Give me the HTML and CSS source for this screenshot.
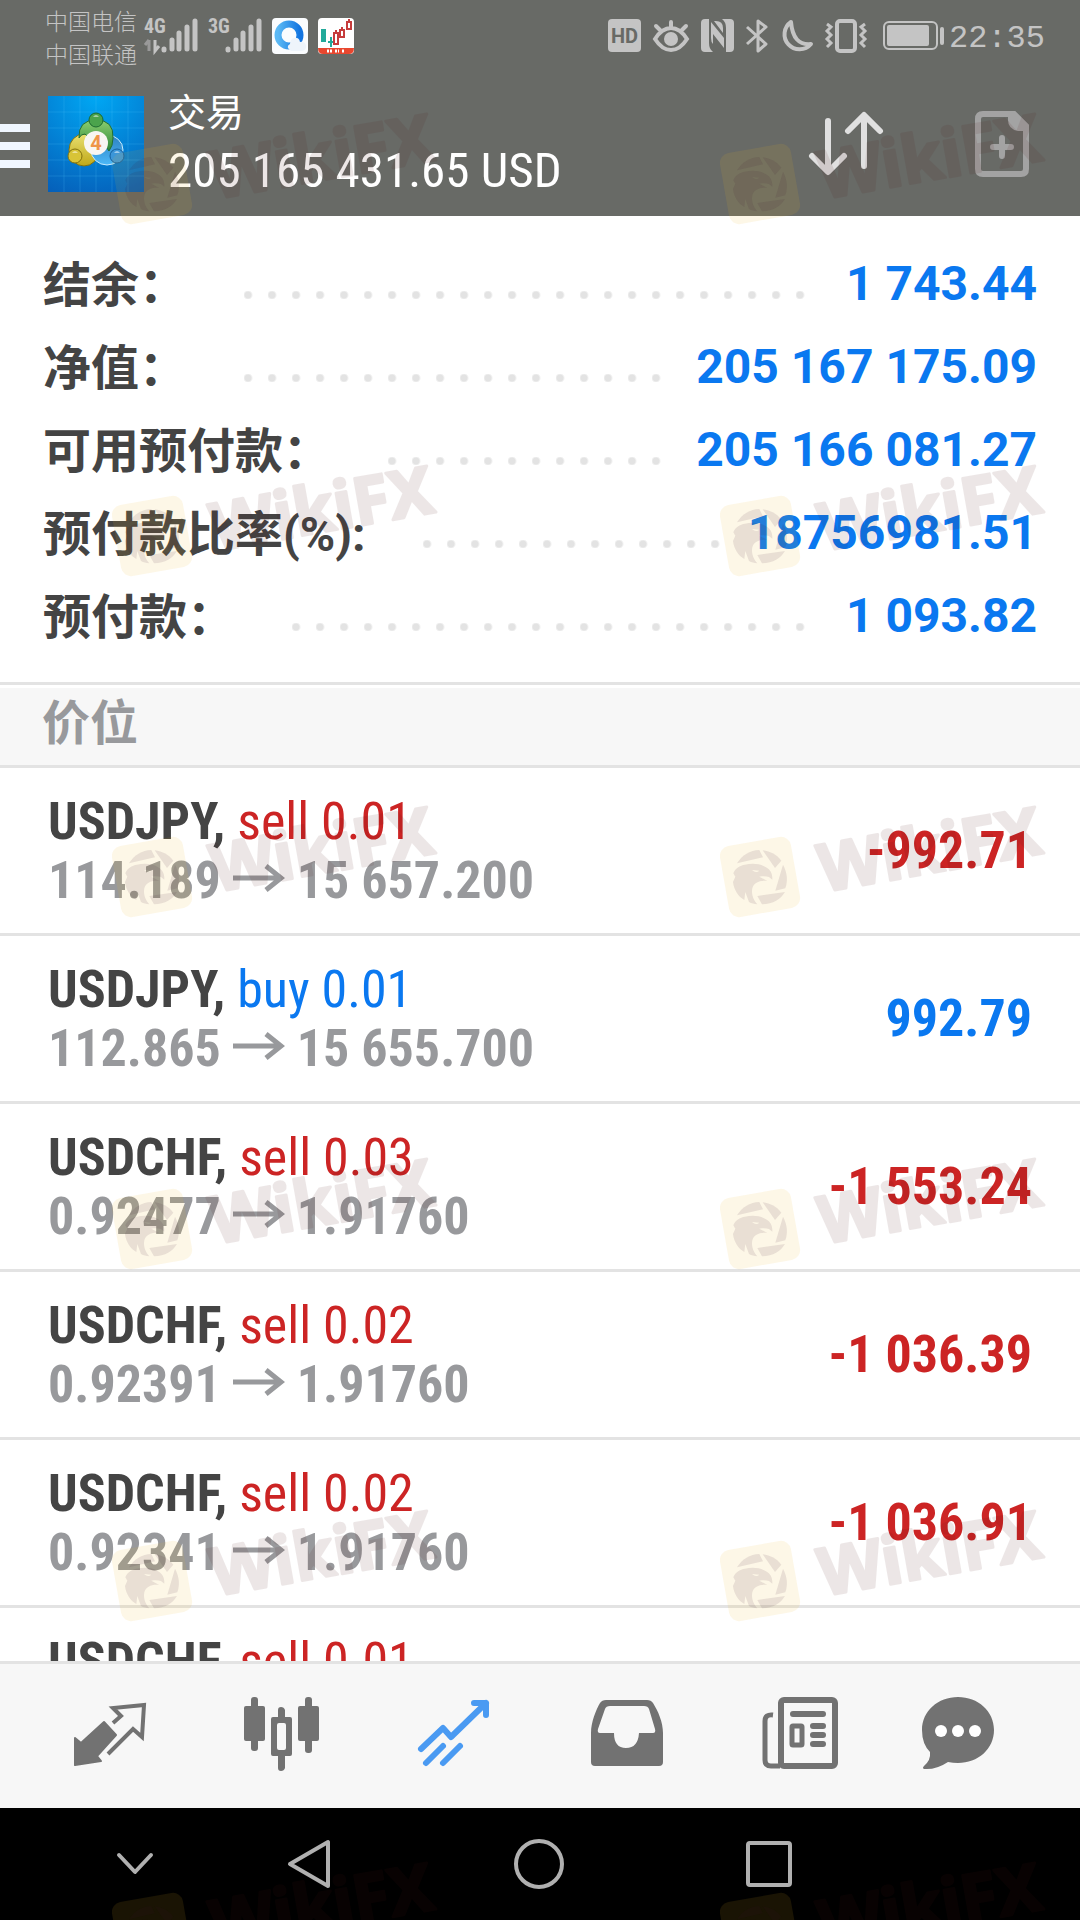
FILE: index.html
```
<!DOCTYPE html>
<html lang="zh-CN">
<head>
    <meta charset="UTF-8">
    <meta name="viewport" content="width=device-width">
    <title>交易</title>
    <link rel="stylesheet" href="styles.css">
</head>
<body>
    <!-- shared shapes -->
    <svg class="defs" width="0" height="0">
        <symbol id="arrow" viewBox="0 0 52 28">
            <path d="M0 14H48M33 2L48 14L33 26" fill="none" stroke="currentColor" stroke-width="5"/>
        </symbol>
        <symbol id="mark" viewBox="0 0 340 125">
            <rect x="4" y="44" width="72" height="72" rx="10" transform="rotate(-10 40 80)" fill="#ecb424" fill-opacity=".11"/>
            <g transform="translate(-40 -17) scale(.3333)" fill="#3c1430" fill-opacity=".1">
                <path d="M171 250C186 225 210 211 238 210L249 232Z"/>
                <path d="M248 211C272 214 290 224 304 242L285 264Z"/>
                <path d="M309 254C322 278 324 302 316 325L286 332Z"/>
                <path d="M315 336C302 358 280 372 246 373L232 348Z"/>
                <path d="M160 280C165 265 180 256 195 254C215 250 240 250 258 262C272 270 278 282 277 299L267 291C258 288 248 288 238 290L262 303C240 300 222 308 217 325C213 345 222 362 232 373C222 372 215 370 207 366L196 336L193 360C175 350 162 330 159 306L166 290ZM216 270Q228 281 238 272Z"/>
            </g>
            <text class="mark-text" x="103" y="95" transform="rotate(-10 103 95)">WikiFX</text>
        </symbol>
    </svg>

    <div class="app">
        <header class="head">
            <div class="status">
                <div class="carrier">
                    <span>中国电信</span>
                    <span>中国联通</span>
                </div>
                <svg width="54" height="36" viewBox="0 0 54 36">
                    <text x="0" y="15">4G</text>
                    <path d="M5 22V33M5 22L1 27" fill="none" stroke="#999" stroke-width="3"/>
                    <path d="M11 22V33L15 28" fill="none" stroke="currentColor" stroke-width="3"/>
                    <path d="M20 31V32M28 22V31M35 15V31M43 9V31M51 3V31" fill="none" stroke="currentColor" stroke-width="5" stroke-linecap="round"/>
                </svg>
                <svg class="sim2" width="54" height="36" viewBox="0 0 54 36">
                    <text x="0" y="15">3G</text>
                    <path d="M20 31V32M28 22V31M35 15V31M43 9V31M51 3V31" fill="none" stroke="currentColor" stroke-width="5" stroke-linecap="round"/>
                </svg>
                <svg class="gap" width="36" height="36" viewBox="0 0 36 36">
                    <defs><linearGradient id="ring"><stop offset="0" stop-color="#5ab8f4"/><stop offset="1" stop-color="#1274e0"/></linearGradient></defs>
                    <rect width="36" height="36" rx="4" fill="#fafcfe"/>
                    <circle cx="17" cy="17" r="11" fill="none" stroke="url(#ring)" stroke-width="7"/>
                    <path d="M19 33H30Q35 32 34 27Q32 23 28 24Q27 19 22 20Q18 21 18 26Q13 29 19 33Z" fill="#eef4fb"/>
                </svg>
                <svg class="gap" width="36" height="36" viewBox="0 0 36 36">
                    <rect width="36" height="36" rx="4" fill="#fff"/>
                    <path d="M0 30H36Q36 36 31 36H5Q0 36 0 30Z" fill="#e8472f"/>
                    <path d="M3 11H8V24H3ZM10 23H15V25H10ZM12 19H14V29H12Z" fill="#22a99a"/>
                    <path d="M16 15H20V26H16ZM22 12H26V19H22ZM29 4H33V11H29ZM18 12V15M24 9V12M31 1V4" fill="none" stroke="#c63c3c" stroke-width="2"/>
                    <path d="M9 33H15M17 33H21M24 33H26" stroke="#fff" stroke-width="3" stroke-dasharray="2 1"/>
                </svg>
                <div class="tray">
                    <svg width="33" height="36" viewBox="0 0 33 36">
                        <rect y="1" width="33" height="33" rx="4" fill="currentColor"/>
                        <text class="hd" x="3" y="25">HD</text>
                    </svg>
                    <svg width="36" height="36" viewBox="0 0 36 36" fill="none" stroke="currentColor" stroke-width="4" stroke-linecap="round">
                        <path d="M2 21Q9 10 18 10T34 21Q27 32 18 32T2 21ZM18 9V4M7 12L3 8M29 12L33 8"/>
                        <circle cx="18" cy="21" r="7" fill="currentColor" stroke="none"/>
                    </svg>
                    <svg width="33" height="36" viewBox="0 0 33 36">
                        <path d="M4 1H8V25Q8 31 12 34H4Q0 34 0 30V5Q0 1 4 1ZM29 34H25V10Q25 4 21 1H29Q33 1 33 5V30Q33 34 29 34Z" fill="currentColor"/>
                        <path d="M10 4L23 20V30L12 16V26Q10 24 10 20ZM13 3Q22 2 22 10V15Z" fill="currentColor"/>
                    </svg>
                    <svg width="22" height="36" viewBox="0 0 22 36" fill="none" stroke="currentColor" stroke-width="3">
                        <path d="M1 9L20 26L12 33V3L20 9L1 26" stroke-linejoin="round"/>
                    </svg>
                    <svg width="33" height="36" viewBox="0 0 33 36" fill="none" stroke="currentColor" stroke-width="4" stroke-linejoin="round">
                        <path d="M11 4A15 15 0 1 0 31 26Q13 28 11 4Z"/>
                    </svg>
                    <svg width="42" height="36" viewBox="0 0 42 36" fill="none" stroke="currentColor">
                        <rect x="12" y="3" width="18" height="30" rx="3" stroke-width="4"/>
                        <path d="M2 6L6 9L2 13L6 17L2 21L6 25L2 29M40 6L36 9L40 13L36 17L40 21L36 25L40 29" stroke-width="3"/>
                    </svg>
                    <svg class="battery" width="62" height="36" viewBox="0 0 62 36">
                        <rect x="1" y="4" width="53" height="27" rx="5" fill="none" stroke="currentColor" stroke-width="2"/>
                        <rect x="4" y="7" width="42" height="21" rx="2" fill="currentColor"/>
                        <rect x="57" y="9" width="4" height="18" rx="2" fill="currentColor"/>
                    </svg>
                    <time class="clock">22:35</time>
                </div>
            </div>
            <div class="bar">
                <button class="menu" aria-label="菜单"><i></i><i></i><i></i></button>
                <svg class="logo" width="96" height="96" viewBox="0 0 96 96">
                    <defs>
                        <radialGradient id="sky" cx=".5" cy="0" r="1.1"><stop offset="0" stop-color="#00a8f4"/><stop offset="1" stop-color="#0560ba"/></radialGradient>
                        <linearGradient id="gr" x2="0" y2="1"><stop offset="0" stop-color="#8ccf70"/><stop offset="1" stop-color="#2c8738"/></linearGradient>
                        <linearGradient id="ye" x2="0" y2="1"><stop offset="0" stop-color="#e8e070"/><stop offset="1" stop-color="#c0a818"/></linearGradient>
                        <linearGradient id="bl" x2="0" y2="1"><stop offset="0" stop-color="#2d80c0"/><stop offset="1" stop-color="#4cb8f8"/></linearGradient>
                    </defs>
                    <rect width="96" height="96" fill="url(#sky)"/>
                    <path d="M16 0V96M32 0V96M48 0V96M64 0V96M80 0V96M0 16H96M0 32H96M0 48H96M0 64H96M0 80H96" stroke="#5cc8ff" stroke-opacity=".2"/>
                    <ellipse cx="36" cy="54" rx="15" ry="16" fill="url(#ye)" stroke="#82720e"/>
                    <ellipse cx="59" cy="54" rx="16" ry="15" fill="url(#bl)" stroke="#c8ecff"/>
                    <path d="M31 42Q30 24 48 24T65 42Q65 50 61 55L53 44H43L37 38Q33 38 31 42Z" fill="url(#gr)" stroke="#226e34"/>
                    <circle cx="48" cy="24" r="7" fill="#4ba34c" stroke="#1c6a30"/>
                    <circle cx="27" cy="60" r="7" fill="#d8c437" stroke="#82720e"/>
                    <circle cx="69" cy="60" r="7" fill="#3c96d8" stroke="#155f9e"/>
                    <path d="M45 21Q48 17 51 21ZM24 57Q27 53 30 57ZM66 57Q69 53 72 57Z" fill="#fff" fill-opacity=".5"/>
                    <circle cx="48" cy="47" r="12" fill="#f8f6f2"/>
                    <text x="48" y="54" font-size="20" font-weight="700" text-anchor="middle" fill="#ef9548">4</text>
                </svg>
                <div class="account">
                    <h1>交易</h1>
                    <p>205 165 431.65 USD</p>
                </div>
                <button class="sort" aria-label="排序">
                    <svg width="76" height="68" viewBox="0 0 76 68" fill="none" stroke="#e0e0e0" stroke-width="6" stroke-linecap="round" stroke-linejoin="round">
                        <path d="M20 11V61M4 46L20 62L36 46M56 56V6M40 21L56 5L72 21"/>
                    </svg>
                </button>
                <button aria-label="新订单">
                    <svg width="56" height="68" viewBox="0 0 56 68" fill="none" stroke="#a3a3a3" stroke-width="6">
                        <path d="M9 4H40L52 16V59Q52 64 47 64H9Q4 64 4 59V9Q4 4 9 4Z"/>
                        <path d="M34 4H41L54 17V21H44Q34 19 34 10Z" fill="#a3a3a3" stroke="none"/>
                        <path d="M28 28V46M19 37H37" stroke-linecap="round"/>
                    </svg>
                </button>
            </div>
        </header>

        <main class="content">
            <dl class="summary">
                <div class="line"><dt>结余：</dt><dd>1 743.44</dd></div>
                <div class="line"><dt>净值：</dt><dd>205 167 175.09</dd></div>
                <div class="line"><dt>可用预付款：</dt><dd>205 166 081.27</dd></div>
                <div class="line"><dt>预付款比率(%):</dt><dd>18756981.51</dd></div>
                <div class="line"><dt>预付款：</dt><dd>1 093.82</dd></div>
            </dl>
            <h2 class="section">价位</h2>
            <ul class="deals">
                <li>
                    <div>
                        <p><b>USDJPY,</b> <span class="sell">sell 0.01</span></p>
                        <p class="price">114.189 <svg class="to"><use href="#arrow"/></svg> 15 657.200</p>
                    </div>
                    <strong class="sell">-992.71</strong>
                </li>
                <li>
                    <div>
                        <p><b>USDJPY,</b> <span class="buy">buy 0.01</span></p>
                        <p class="price">112.865 <svg class="to"><use href="#arrow"/></svg> 15 655.700</p>
                    </div>
                    <strong class="buy">992.79</strong>
                </li>
                <li>
                    <div>
                        <p><b>USDCHF,</b> <span class="sell">sell 0.03</span></p>
                        <p class="price">0.92477 <svg class="to"><use href="#arrow"/></svg> 1.91760</p>
                    </div>
                    <strong class="sell">-1 553.24</strong>
                </li>
                <li>
                    <div>
                        <p><b>USDCHF,</b> <span class="sell">sell 0.02</span></p>
                        <p class="price">0.92391 <svg class="to"><use href="#arrow"/></svg> 1.91760</p>
                    </div>
                    <strong class="sell">-1 036.39</strong>
                </li>
                <li>
                    <div>
                        <p><b>USDCHF,</b> <span class="sell">sell 0.02</span></p>
                        <p class="price">0.92341 <svg class="to"><use href="#arrow"/></svg> 1.91760</p>
                    </div>
                    <strong class="sell">-1 036.91</strong>
                </li>
                <li>
                    <div>
                        <p><b>USDCHF,</b> <span class="sell">sell 0.01</span></p>
                    </div>
                </li>
            </ul>
        </main>

        <nav class="tabs">
            <a href="#quotes" aria-label="行情">
                <svg width="96" height="96" viewBox="0 0 96 96">
                    <path d="M13 50L19 55L42 34L54 47L35 68L39 73L13 77Z" fill="currentColor" stroke="currentColor" stroke-width="2" stroke-linejoin="round"/>
                    <path d="M51 35L59 28L51 20L82 17L80 49L71 41L46 66" fill="none" stroke="currentColor" stroke-width="4"/>
                </svg>
            </a>
            <a href="#charts" aria-label="图表">
                <svg width="96" height="96" viewBox="0 0 96 96" fill="currentColor">
                    <rect x="10" y="18" width="21" height="35" rx="2"/>
                    <rect x="17" y="9" width="7" height="54" rx="3"/>
                    <path d="M39 29H56Q58 29 58 31V66Q58 68 56 68H39Q37 68 37 66V31Q37 29 39 29ZM45 35Q43 35 43 37V60Q43 62 45 62H50Q52 62 52 60V37Q52 35 50 35Z" fill-rule="evenodd"/>
                    <path d="M44 30V22Q44 19 47 19T51 22V30ZM44 67V80Q44 83 47 83T51 80V67Z"/>
                    <rect x="64" y="18" width="21" height="35" rx="2"/>
                    <rect x="71" y="9" width="7" height="56" rx="3"/>
                </svg>
            </a>
            <a class="cur" href="#trade" aria-label="交易">
                <svg width="96" height="96" viewBox="0 0 96 96" fill="none" stroke="currentColor" stroke-width="6" stroke-linecap="round" stroke-linejoin="round">
                    <path d="M15 61L37 40L45 49L80 15M68 15H80V27"/>
                    <path d="M20 75L37 58M37 75L54 58"/>
                </svg>
            </a>
            <a href="#history" aria-label="历史">
                <svg width="96" height="96" viewBox="0 0 96 96" fill="currentColor">
                    <path fill-rule="evenodd" d="M13 45C13 34 18 22 22 15Q24 12 28 12H69Q73 12 75 15C80 23 85 34 85 45V74Q85 78 81 78H17Q13 78 13 74ZM32 18Q28 18 27 21L20 41Q19 45 22 45H36Q36 60 48 60T61 45H75Q78 45 77 41L71 21Q70 18 66 18Z"/>
                </svg>
            </a>
            <a href="#news" aria-label="新闻">
                <svg width="96" height="96" viewBox="0 0 96 96" fill="none" stroke="currentColor" stroke-width="6" stroke-linecap="round">
                    <rect x="31" y="12" width="54" height="66" rx="3"/>
                    <path d="M23 27Q15 26 15 33V72Q15 78 21 78H30" stroke-width="5" stroke-linecap="butt"/>
                    <path d="M43 26H73M63 38H73M63 47H73M63 56H73"/>
                    <rect x="42" y="38" width="10" height="19" rx="1" stroke-width="5"/>
                </svg>
            </a>
            <a href="#chat" aria-label="聊天">
                <svg width="96" height="96" viewBox="0 0 96 96" fill="currentColor">
                    <path d="M36 9C56 9 72 23 72 42S56 75 36 75Q31 75 26 74Q14 82 2 81Q0 80 2 78Q9 72 8 64Q0 56 0 42C0 23 16 9 36 9Z"/>
                    <g fill="#fff"><circle cx="19" cy="43" r="6"/><circle cx="36" cy="43" r="6"/><circle cx="53" cy="43" r="6"/></g>
                </svg>
            </a>
        </nav>

        <div class="system">
            <button aria-label="收起"><svg width="52" height="52" viewBox="0 0 52 52"><path d="M10 17L26 34L42 17"/></svg></button>
            <button aria-label="返回"><svg width="52" height="52" viewBox="0 0 52 52"><path d="M45 4V48L7 26Z"/></svg></button>
            <button aria-label="主页"><svg width="52" height="52" viewBox="0 0 52 52"><circle cx="26" cy="26" r="23"/></svg></button>
            <button aria-label="最近"><svg width="52" height="52" viewBox="0 0 52 52"><rect x="5" y="5" width="42" height="42" rx="2"/></svg></button>
        </div>

        <!-- watermark layer -->
        <div class="marks">
            <svg><use href="#mark"/></svg><svg><use href="#mark"/></svg>
            <svg><use href="#mark"/></svg><svg><use href="#mark"/></svg>
            <svg><use href="#mark"/></svg><svg><use href="#mark"/></svg>
            <svg><use href="#mark"/></svg><svg><use href="#mark"/></svg>
            <svg><use href="#mark"/></svg><svg><use href="#mark"/></svg>
            <svg><use href="#mark"/></svg><svg><use href="#mark"/></svg>
        </div>
    </div>
</body>
</html>
```
FILE: styles.css
```
* {
    margin: 0;
    padding: 0;
    box-sizing: border-box;
    text-decoration: none;
    list-style: none;
}

body {
    font-family: Roboto, "Noto Sans CJK SC", sans-serif;
    background: #fff;
}

button {
    border: 0;
    background: none;
    cursor: pointer;
}

svg {
    display: block;
}

.defs {
    position: absolute;
}

.app {
    position: relative;
    display: flex;
    flex-direction: column;
    height: 100vh;
    overflow: hidden;
}

/* header */
.head {
    flex: none;
    background: #686a66;
    color: #fff;
}

.status {
    display: flex;
    align-items: center;
    height: 72px;
    padding: 0 35px 0 45px;
    color: #c4c4c4;
}

.status svg {
    overflow: visible;
}

.status text {
    fill: currentColor;
    font-family: "Roboto Condensed", Roboto, sans-serif;
    font-size: 20px;
    font-weight: 700;
}

.status .hd {
    fill: #686a66;
    font-family: Roboto, sans-serif;
}

.carrier {
    width: 99px;
    padding-top: 6px;
    font-size: 23px;
    font-weight: 300;
    line-height: 33px;
    white-space: nowrap;
}

.carrier span {
    display: block;
}

.sim2,
.gap {
    margin-left: 10px;
}

.tray {
    display: flex;
    align-items: center;
    gap: 12px;
    margin-left: auto;
}

.battery {
    margin: 0 -8px 0 4px;
}

.clock {
    padding-top: 5px;
    font-family: "Liberation Mono", monospace;
    font-size: 32px;
    line-height: 40px;
}

.bar {
    display: flex;
    align-items: center;
    height: 144px;
    padding-right: 50px;
}

.menu {
    display: flex;
    flex-direction: column;
    gap: 10px;
    width: 30px;
    padding-top: 4px;
}

.menu i {
    height: 8px;
    background: #f0f7ff;
}

.logo {
    margin: 0 24px 0 18px;
}

.account {
    flex: 1;
    padding-bottom: 2px;
    white-space: nowrap;
}

.account h1 {
    font-size: 38px;
    font-weight: 400;
    line-height: 56px;
}

.account p {
    font-family: "Roboto Condensed", Roboto, sans-serif;
    font-size: 49px;
    line-height: 60px;
}

.sort {
    margin-right: 90px;
}

/* balance */
.content {
    flex: 1;
    min-height: 0;
    overflow: hidden;
}

.summary {
    padding: 26px 43px 25px;
    border-bottom: 3px solid #e3e3e3;
}

.line {
    display: flex;
    align-items: center;
    font-size: 48px;
    font-weight: 700;
    line-height: 83px;
    white-space: nowrap;
}

.line dt {
    display: flex;
    flex: 1;
    align-items: center;
    height: 83px;
    padding-top: 3px;
    color: #444;
}

.line dt::after {
    content: "";
    flex: 1;
    height: 8px;
    margin: 20px 28px 0 57px;
    background: radial-gradient(circle at 4px 4px, #e3e3e3 3px, transparent 5px) 0 0 / 24px 8px repeat-x;
}

.line dd {
    color: #0a78f0;
}

.section {
    height: 83px;
    padding: 0 42px;
    border-top: 3px solid #fff;
    border-bottom: 3px solid #e3e3e3;
    background: #f7f7f7;
    color: #98999c;
    font-size: 48px;
    font-weight: 700;
    line-height: 72px;
}

/* positions */
.deals li {
    display: flex;
    justify-content: space-between;
    align-items: center;
    height: 168px;
    padding: 0 48px;
    border-bottom: 3px solid #e3e3e3;
    font-family: "Roboto Condensed", Roboto, sans-serif;
    font-size: 52px;
    line-height: 59px;
    white-space: nowrap;
}

.deals li:last-child {
    align-items: flex-start;
    padding-top: 24px;
}

.deals b,
.deals strong {
    font-weight: 700;
}

.deals b {
    color: #444;
}

.deals .price {
    color: #98999c;
    font-weight: 700;
}

.to {
    display: inline-block;
    width: 52px;
    height: 28px;
    vertical-align: 6px;
}

.deals .sell {
    color: #cc2424;
}

.deals .buy {
    color: #0a78f0;
}

/* tabs */
.tabs {
    display: flex;
    flex: none;
    justify-content: space-around;
    align-items: center;
    height: 147px;
    padding: 0 24px;
    border-top: 3px solid #e3e3e3;
    background: #f7f7f7;
}

.tabs a {
    color: #727272;
}

.tabs .cur {
    color: #4a9af2;
}

.system {
    display: grid;
    flex: none;
    grid-template-columns: 118fr 230fr 230fr 230fr;
    justify-items: center;
    align-items: center;
    height: 112px;
    padding: 0 196px 0 76px;
    background: #000;
}

.system svg {
    fill: none;
    stroke: #b0b0b0;
    stroke-width: 4;
    stroke-linejoin: round;
    stroke-linecap: round;
}

.marks {
    position: absolute;
    top: 104px;
    left: 112px;
    display: grid;
    grid-template-columns: 608px 340px;
    grid-template-rows: 125px 114px repeat(4, 125px);
    row-gap: 227px;
    pointer-events: none;
}

.marks svg {
    width: 340px;
    height: 125px;
}

.mark-text {
    fill: #501818;
    stroke: #501818;
    stroke-width: 3;
    stroke-linejoin: round;
    opacity: .1;
    font-family: "Noto Sans", sans-serif;
    font-size: 66px;
    font-weight: 700;
}
```
